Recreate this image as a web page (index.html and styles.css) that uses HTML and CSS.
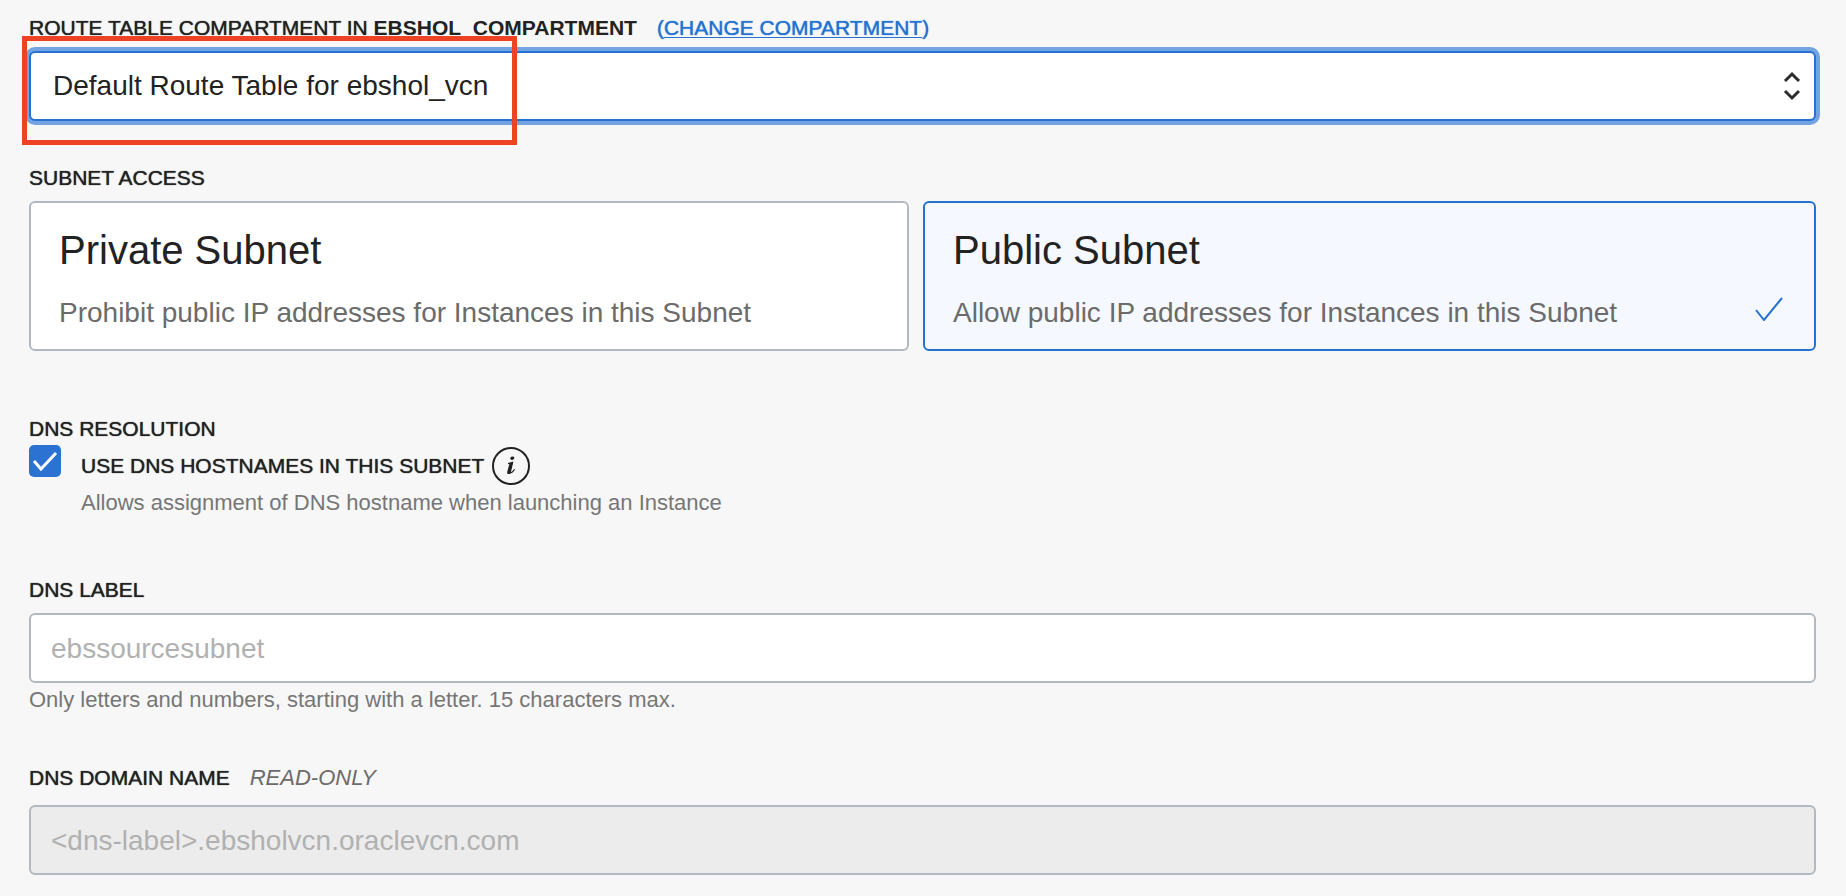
FILE: index.html
```html
<!DOCTYPE html>
<html lang="en">
<head>
<meta charset="utf-8">
<title>Create Subnet</title>
<link rel="stylesheet" href="styles.css">
</head>
<body>
<form class="form">
  <div class="field">
    <div class="label-row">
      <label class="label" for="route-table">ROUTE TABLE COMPARTMENT IN <strong>EBSHOL_COMPARTMENT</strong></label>
      <a class="change-link" href="#">(<span class="change-text">CHANGE COMPARTMENT</span>)</a>
    </div>
    <div class="select-wrap">
      <select class="control select" id="route-table">
        <option>Default Route Table for ebshol_vcn</option>
      </select>
      <svg class="select-arrows" viewBox="0 0 18 30" aria-hidden="true"><path d="M2 10 9 3l7 7M2 20l7 7 7-7"/></svg>
      <div class="highlight"></div>
    </div>
  </div>

  <fieldset class="field access">
    <legend class="label legend">SUBNET ACCESS</legend>
    <div class="cards">
      <label class="card">
        <input class="card-radio" type="radio" name="access" value="private">
        <span class="card-title">Private Subnet</span>
        <span class="card-text">Prohibit public IP addresses for Instances in this Subnet</span>
      </label>
      <label class="card selected">
        <input class="card-radio" type="radio" name="access" value="public" checked>
        <span class="card-title">Public Subnet</span>
        <span class="card-text">Allow public IP addresses for Instances in this Subnet</span>
        <svg class="card-check" viewBox="0 0 28 24" aria-hidden="true"><path d="M1 13l8 10L27 1"/></svg>
      </label>
    </div>
  </fieldset>

  <fieldset class="field dns">
    <legend class="label">DNS RESOLUTION</legend>
    <div class="check-row">
      <input class="checkbox" type="checkbox" id="hostnames" aria-describedby="hostnames-help" checked>
      <svg class="tick" viewBox="0 0 32 32" aria-hidden="true"><path d="M5 16l7 8L27 8"/></svg>
      <div class="check-body">
        <div class="check-title">
          <label class="label" for="hostnames">USE DNS HOSTNAMES IN THIS SUBNET</label>
          <button class="info" type="button" aria-label="More information">
            <svg class="info-icon" viewBox="0 0 38 38" aria-hidden="true">
              <circle cx="19" cy="19" r="18" fill="none" stroke="currentColor" stroke-width="2"/>
              <ellipse cx="20.3" cy="11.2" rx="2.1" ry="1.7" fill="currentColor" transform="rotate(-18 20.3 11.2)"/>
              <path d="M16 16.6l4.6-1.2-2.1 8.8c-.3 1.4.3 1.8 1.4 1.1 1.1-.7 2-2 2.7-3.1" fill="none" stroke="currentColor" stroke-width="1.2"/>
              <path d="M17.6 16.2l3.2-.8-2.2 9c-.3 1.2.6 1 1.6.5-1 1.4-2.2 2.2-3.6 2.2-1.3 0-1.7-1-1.3-2.6z" fill="currentColor"/>
            </svg>
          </button>
        </div>
        <div class="help" id="hostnames-help">Allows assignment of DNS hostname when launching an Instance</div>
      </div>
    </div>
  </fieldset>

  <div class="field dns-label">
    <div class="label-row"><label class="label" for="dns-label">DNS LABEL</label></div>
    <input class="control" type="text" id="dns-label" placeholder="ebssourcesubnet" aria-describedby="dns-help">
    <div class="help dns-help" id="dns-help">Only letters and numbers, starting with a letter. 15 characters max.</div>
  </div>

  <div class="field domain">
    <div class="label-row domain-row">
      <label class="label" for="domain">DNS DOMAIN NAME</label>
      <em class="readonly-note">READ-ONLY</em>
    </div>
    <input class="control readonly" type="text" id="domain" placeholder="&lt;dns-label&gt;.ebsholvcn.oraclevcn.com" readonly>
  </div>
</form>
</body>
</html>
```

FILE: styles.css
```css
* { box-sizing: border-box; }

body {
  margin: 0;
  background: #f7f7f7;
  color: #222;
  font: 22px/26px "Liberation Sans", Arial, sans-serif;
}

.form { padding: 15px 30px 20px 29px; }
.field { margin: 0; padding: 0; border: 0; min-width: 0; }

.label-row { display: flex; gap: 20px; margin-bottom: 10px; }
.label { padding: 0; font-size: 21px; text-shadow: 0 0 1px #222; }
.label strong { text-shadow: none; }
.legend { margin-bottom: 10px; }

.change-link {
  color: #2672d0;
  font-size: 21px;
  text-decoration: none;
  text-shadow: 0 0 1px #2672d0;
}
.change-text { text-decoration: underline; text-underline-offset: 2px; text-decoration-thickness: 1px; text-decoration-skip-ink: none; }

.control {
  display: block;
  width: 100%;
  height: 70px;
  padding: 2px 20px 0;
  border: 2px solid #b3b8c2;
  border-radius: 6px;
  background: #fff;
  color: #222;
  font: 28px/34px "Liberation Sans", Arial, sans-serif;
  outline: 0;
}
.control::placeholder { color: #b1b1b1; opacity: 1; }
.readonly { background: #ececec; }

.select-wrap { position: relative; }
.select {
  appearance: none;
  padding: 0 60px 0 22px;
  border-color: #2672d0;
  box-shadow: 0 0 0 4px #73a4e1;
}
.select-arrows {
  position: absolute;
  right: 15px;
  top: 20px;
  width: 18px;
  height: 30px;
  fill: none;
  stroke: #2c2c2c;
  stroke-width: 3;
}
.highlight {
  position: absolute;
  left: -7px;
  top: -15px;
  width: 495px;
  height: 109px;
  border: 5px solid #ed4224;
  pointer-events: none;
}

.access { margin-top: 44px; }
.cards { display: grid; grid-template-columns: 880fr 893fr; gap: 14px; }
.card {
  position: relative;
  display: flex;
  flex-direction: column;
  gap: 23px;
  padding: 24px 28px 19px;
  border: 2px solid #b3b8c2;
  border-radius: 6px;
  background: #fff;
}
.selected { border-color: #2672d0; background: #f5f8fe; }
.card-radio { position: absolute; opacity: 0; margin: 0; }
.card-title { font-size: 40px; line-height: 46px; }
.card-text { color: #6b6b6b; font-size: 28px; line-height: 34px; }
.card-check {
  position: absolute;
  right: 31px;
  bottom: 28px;
  width: 28px;
  height: 24px;
  fill: none;
  stroke: #2672d0;
  stroke-width: 2;
}

.dns { margin-top: 65px; }
.check-row { position: relative; display: flex; gap: 20px; padding-top: 3px; }
.checkbox {
  appearance: none;
  flex: none;
  width: 32px;
  height: 32px;
  margin: 0;
  border-radius: 5px;
  background: #2b72d2;
}
.tick {
  position: absolute;
  left: 0;
  top: 3px;
  width: 32px;
  height: 32px;
  fill: none;
  stroke: #fff;
  stroke-width: 3;
  pointer-events: none;
}
.check-body { padding-top: 2px; }
.check-title { display: flex; align-items: center; gap: 8px; }
.info { padding: 0; border: 0; background: none; color: #222; }
.info-icon { display: block; width: 38px; height: 38px; }
.help { color: #767676; }
.check-body .help { margin-top: 5px; }

.dns-label { margin-top: 61px; }
.dns-help { margin-top: 4px; }
.domain { margin-top: 52px; }
.domain-row { margin-bottom: 14px; }
.readonly-note { color: #6b6b6b; }
```
